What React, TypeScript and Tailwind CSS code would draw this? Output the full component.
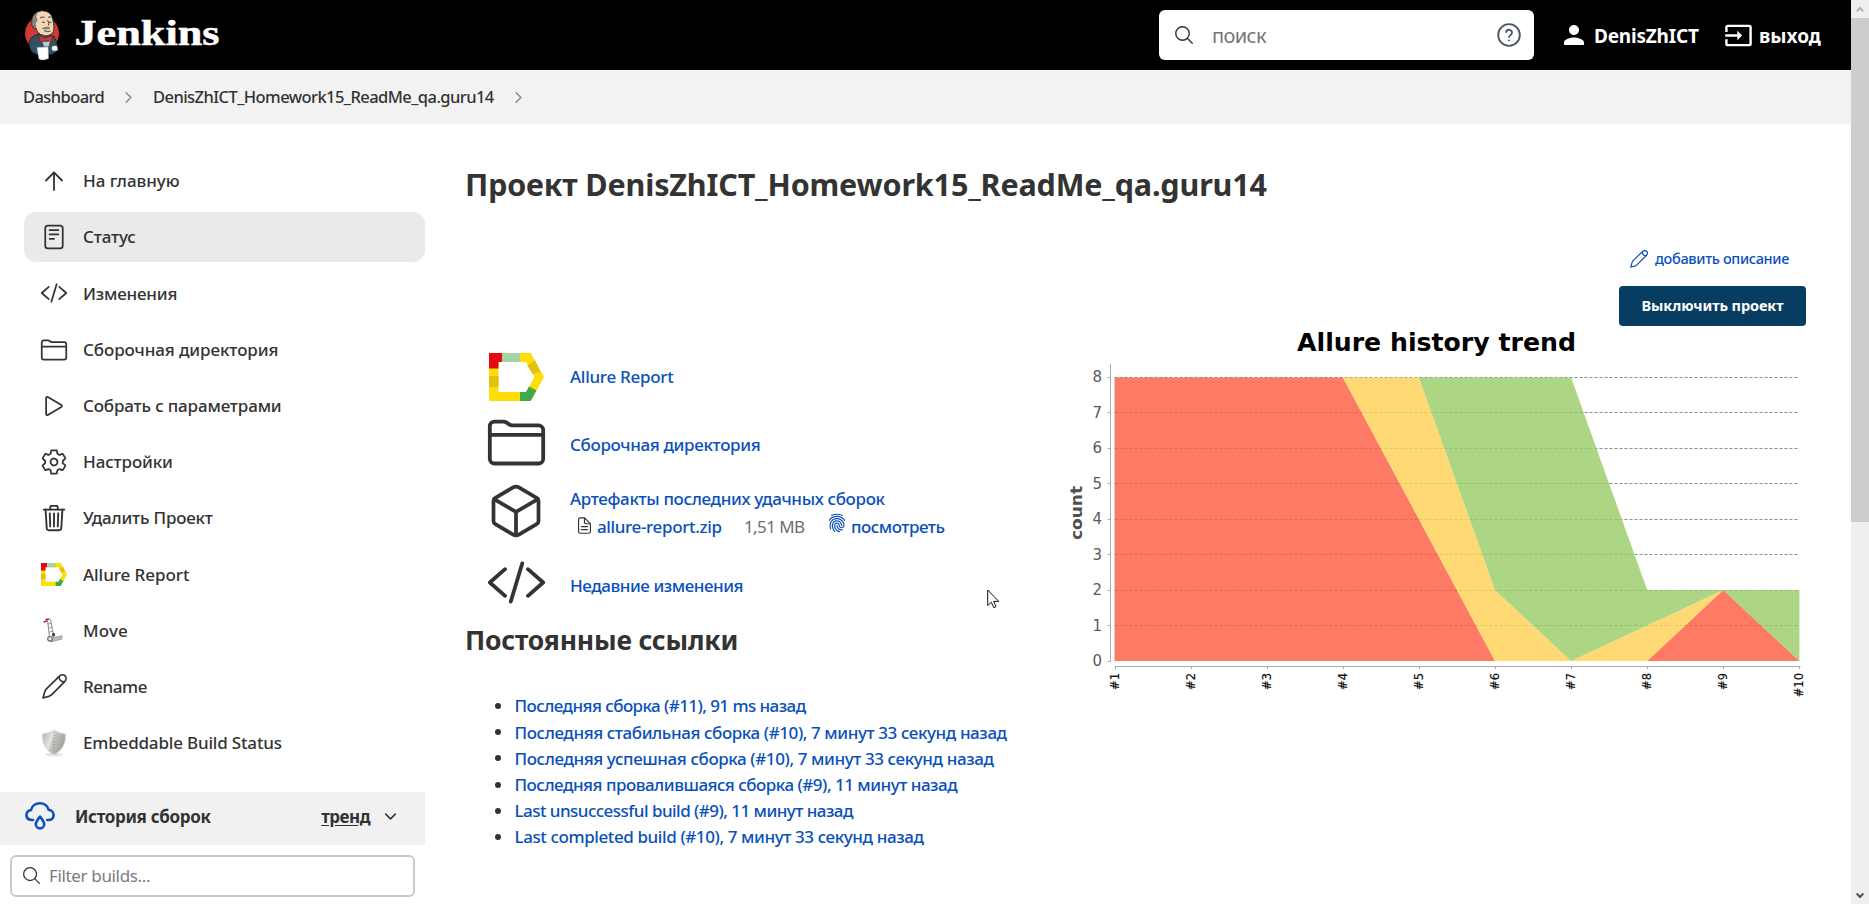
import React from "react";
import {
  IoReaderOutline,
  IoCodeSlashOutline,
  IoFolderOutline,
  IoPlayOutline,
  IoSettingsOutline,
  IoTrashOutline,
  IoCubeOutline,
  IoSearchOutline,
  IoChevronForward,
  IoChevronDown,
  IoDocumentTextOutline,
  IoFingerPrint,
} from "react-icons/io5";
import { MdInput, MdPerson } from "react-icons/md";

function JenkinsLogo() {
  return (
    <svg width="200" height="60" viewBox="0 0 200 60" className="shrink-0">
      <ellipse cx="18" cy="28.500" rx="17" ry="17" fill="#d33833" />
      <path d="M7 33 L13 29.500 L24 30 L30 31.500 Q35 40 32 46 L29 49 L14 50 L8 47 Q3 39 7 33Z" fill="#335061" stroke="#1b2a33" strokeWidth="1" />
      <path d="M8 18 Q7.500 7 17.500 5.800 Q27.500 5.500 29 15 L30 22 Q30.500 27 27 29.500 Q22 32.500 16.500 29.500 Q12.500 27 12 23 Q7.500 24 8 18Z" fill="#f0d6b7" stroke="#231f20" strokeWidth="0.9" />
      <path d="M8 18 Q7.500 10 13 7.500 Q10.500 12 13 15.500 L11 18 L11.500 22 Q7.500 22 8 18Z" fill="#8a8784" stroke="#3a3735" strokeWidth="0.6" />
      <path d="M16 13 q2.500 -2 4.500 -.5 M24 12.500 q2 -1.500 3.500 0 M18 17 q2 1 3 0 M25 17 q1.500 1 2.500 0 M23.500 15 q2.500 3.500 1 5.500 M20 25.500 q3.500 2 6.500 .5" fill="none" stroke="#3b2b20" strokeWidth="0.9" />
      <path d="M18.500 23.500 q3.500 -2.500 7.500 -.5 q-3 2 -7.500 .5Z" fill="#9b9894" stroke="#4a4642" strokeWidth="0.5" />
      <path d="M15.500 31 l5.500 2.500 6.500 -2.500 .8 6 -6 -1.500 -6 2Z" fill="#d33833" stroke="#8e1c18" strokeWidth="0.6" />
      <path d="M18.500 37 l7.500 -.5 -1.500 5 -4.500 0Z" fill="#b5c9d3" />
      <path d="M13 42.500 L24 42 L24.500 53.500 Q19 56 15 54Z" fill="#fff" stroke="#bbb" strokeWidth="0.5" />
      <path d="M27.500 41.500 q4 -2.500 6 0 l.5 4 q-4 1.800 -6.500 -.5Z" fill="#f4f4f4" stroke="#444" strokeWidth="0.7" />
      <text x="50.500" y="39.800" textLength="145" lengthAdjust="spacingAndGlyphs" fill="#fff" stroke="#fff" strokeWidth="0.500" className="font-['Liberation_Serif','serif'] text-[36px] font-bold">
        Jenkins
      </text>
    </svg>
  );
}

function HelpIcon() {
  return (
    <svg width="26" height="26" viewBox="0 0 24 24" fill="none" stroke="#4b5462" strokeWidth="1.700" strokeLinecap="round" strokeLinejoin="round">
      <circle cx="12" cy="12" r="10" />
      <path d="M9.400 9.200a2.700 2.700 0 0 1 5.300.9c0 1.800-2.700 2.500-2.700 3.700" />
      <path d="M12 17h.01" />
    </svg>
  );
}

function ArrowUp() {
  return (
    <svg width="30" height="30" viewBox="0 0 30 30" fill="none" stroke="currentColor" strokeWidth="1.800" strokeLinecap="round" strokeLinejoin="round">
      <path d="M7 14.500L15 6.300L23 14.500M15 6.800V24" />
    </svg>
  );
}

function Pencil({ size }: { size: number }) {
  return (
    <svg width={size} height={size} viewBox="0 0 24 24" fill="none" stroke="currentColor" strokeWidth="1.600" strokeLinejoin="round" strokeLinecap="round">
      <path d="M1 23 L2.600 17.200 C3 15.800 3.400 15 4.200 14.200 L16.800 2 C18.600 .5 21 .6 22.200 1.800 C23.500 3.100 23.400 5.400 22 7 L9.600 19.600 C8.800 20.400 8.200 20.800 7.200 21.200 Z" />
      <path d="M16.400 2.600 C16.400 5.400 18.400 7.500 21.400 7.500" />
    </svg>
  );
}

function AllureMark({ width, height }: { width: number; height: number }) {
  return (
    <svg width={width} height={height} viewBox="0 0 55 48" preserveAspectRatio="none">
      <path d="M0 0H41.700L55 24L41.700 48H0ZM9.500 9V39H37L45.500 24L37 9Z" fill="#ffde05" fillRule="evenodd" />
      <path d="M0 0H13V9H9.500V15.500H0Z" fill="#e50914" />
      <path d="M13 0H31V9H13Z" fill="#a6d3a4" />
      <path d="M0 23H9.500V34H0Z" fill="#dfc310" />
      <path d="M38.300 12.500L46 7.500L51.500 18.500L43.500 21Z" fill="#dfc310" />
      <path d="M31 48H41.700L47.500 37.500L40 33.500L37 39H31Z" fill="#3dab49" />
    </svg>
  );
}

function HandTruck() {
  return (
    <svg width="30" height="30" viewBox="0 0 30 30" fill="none">
      <path d="M8.500 4 L10.500 21 M11.500 3.500 L14.500 19" stroke="#8f8f8b" strokeWidth="1.100" />
      <path d="M9.200 8 l3 -.6 M9.800 12 l3 -.6 M10.400 16 l3 -.6" stroke="#777" strokeWidth="0.800" />
      <path d="M4.500 6 L8 5 M6.500 3.500 L10.500 3" stroke="#c8232c" strokeWidth="1.500" />
      <path d="M14 21.800 L23 19.800 L23 23 L12 25.800Z" fill="#b9bdb3" stroke="#8f9489" strokeWidth="0.800" />
      <path d="M13 17.500 L15.500 17 L16 20 L13.500 21Z" fill="#333" />
      <circle cx="11" cy="22.800" r="2.300" fill="#e5e5e2" stroke="#666" strokeWidth="1.100" />
    </svg>
  );
}

function Shield() {
  return (
    <svg width="30" height="30" viewBox="0 0 30 30">
      <defs>
        <linearGradient id="metal" x1="0" x2="1" y1="0" y2="0.400">
          <stop offset="0" stopColor="#aeb2aa" />
          <stop offset="0.450" stopColor="#e3e5df" />
          <stop offset="0.550" stopColor="#c3c6be" />
          <stop offset="1" stopColor="#9ea299" />
        </linearGradient>
      </defs>
      <ellipse cx="15" cy="26.500" rx="9" ry="1.800" fill="#e2e2e2" />
      <path d="M3.500 6 Q10 5.500 15 2 Q20 5.500 26.500 6 Q27.500 20 15 27 Q2.500 20 3.500 6Z" fill="url(#metal)" stroke="#d4d6d0" strokeWidth="0.900" />
      <path d="M15 4V25" stroke="#8d9188" strokeWidth="1" strokeDasharray="1 2" />
    </svg>
  );
}

function CloudDrop() {
  return (
    <svg width="30" height="28" viewBox="0 0 30 28" fill="none" stroke="#0b4fba" strokeWidth="2.600" strokeLinecap="round" strokeLinejoin="round">
      <path d="M8 18 H6.600 C-.2 17.600 -.2 8.800 6 8 C8 -.8 21.500 -1 23.600 7.800 C30.400 8.600 30.200 18 23.400 18 H22.200" />
      <path d="M15 14.500 C12.500 18 10.800 20 10.800 22.200 A4.200 4.200 0 0 0 19.200 22.200 C19.200 20 17.500 18 15 14.500Z" />
    </svg>
  );
}

const tasks = [
  { icon: <ArrowUp />, label: "На главную", tracking: "tracking-[-0.05px]" },
  { icon: <IoReaderOutline size={28} />, label: "Статус", tracking: "tracking-[-0.15px]", active: true },
  { icon: <IoCodeSlashOutline size={28} />, label: "Изменения", tracking: "tracking-[-0.2px]" },
  { icon: <IoFolderOutline size={28} />, label: "Сборочная директория", tracking: "tracking-[-0.09px]" },
  { icon: <IoPlayOutline size={28} />, label: "Собрать с параметрами", tracking: "tracking-[-0.16px]" },
  { icon: <IoSettingsOutline size={28} />, label: "Настройки", tracking: "tracking-[-0.12px]" },
  { icon: <IoTrashOutline size={30} />, label: "Удалить Проект", tracking: "tracking-[-0.2px]" },
  { icon: <AllureMark width={26} height={23} />, label: "Allure Report", tracking: "tracking-[-0.06px]" },
  { icon: <HandTruck />, label: "Move", tracking: "tracking-[0.15px]" },
  { icon: <Pencil size={25} />, label: "Rename", tracking: "tracking-[-0.45px]" },
  { icon: <Shield />, label: "Embeddable Build Status", tracking: "tracking-[-0.18px]" },
];

const permalinks = [
  { label: "Последняя сборка (#11), 91 ms назад", tracking: "tracking-[-0.56px]" },
  { label: "Последняя стабильная сборка (#10), 7 минут 33 секунд назад", tracking: "tracking-[-0.41px]" },
  { label: "Последняя успешная сборка (#10), 7 минут 33 секунд назад", tracking: "tracking-[-0.4px]" },
  { label: "Последняя провалившаяся сборка (#9), 11 минут назад", tracking: "tracking-[-0.49px]" },
  { label: "Last unsuccessful build (#9), 11 минут назад", tracking: "tracking-[-0.53px]" },
  { label: "Last completed build (#10), 7 минут 33 секунд назад", tracking: "tracking-[-0.4px]" },
];

const X0 = 54.5;
const STEP = 76.1;
const Y0 = 335;
const UNIT = 35.45;
const px = (i: number) => X0 + STEP * i;
const py = (v: number) => Y0 - UNIT * v;

const failed = [8, 8, 8, 8, 4, 0, 0, 0, 2, 0];
const broken = [8, 8, 8, 8, 8, 2, 0, 1, 2, 0];
const passed = [8, 8, 8, 8, 8, 8, 8, 2, 2, 2];
const zero = failed.map(() => 0);

function band(top: number[], bottom: number[]) {
  const up = top.map((v, i) => `${px(i)},${py(v)}`);
  const down = bottom.map((v, i) => `${px(i)},${py(v)}`).reverse();
  return [...up, ...down].join(" ");
}

function TrendChart() {
  return (
    <svg width="755" height="380" viewBox="0 0 755 380" className="shrink-0 font-['DejaVu_Sans','sans-serif']">
      <text x="237" y="24.500" textLength="279" lengthAdjust="spacingAndGlyphs" className="text-[24.500px] font-bold">
        Allure history trend
      </text>
      <g stroke="#8c8c8c" strokeWidth="1" strokeDasharray="3 2">
        {[1, 2, 3, 4, 5, 6, 7, 8].map((v) => (
          <line key={v} x1={X0} x2="739" y1={Math.floor(py(v)) + 0.5} y2={Math.floor(py(v)) + 0.5} />
        ))}
      </g>
      <polygon points={band(failed, zero)} fill="#fd5a3e" fillOpacity="0.8" />
      <polygon points={band(broken, failed)} fill="#ffd050" fillOpacity="0.8" />
      <polygon points={band(passed, broken)} fill="#97cc64" fillOpacity="0.8" />
      <g stroke="#a9a9a9" strokeWidth="1">
        <line x1="50.500" x2="50.500" y1="38" y2="336" />
        <line x1="55" x2="740.500" y1="340.500" y2="340.500" />
        {zero.map((_, i) => (
          <line key={i} x1={Math.round(px(i)) + 0.5} x2={Math.round(px(i)) + 0.5} y1="340" y2="343" />
        ))}
        {[0, 1, 2, 3, 4, 5, 6, 7, 8].map((v) => (
          <line key={v} x1="47.500" x2="50" y1={Math.floor(py(v)) + 0.5} y2={Math.floor(py(v)) + 0.5} />
        ))}
      </g>
      {[0, 1, 2, 3, 4, 5, 6, 7, 8].map((v) => (
        <text key={v} x="42" y={py(v) + 5} textAnchor="end" fill="#5a5a5a" className="text-[15px]">
          {v}
        </text>
      ))}
      {zero.map((_, i) => (
        <text key={i} transform={`translate(${px(i) + 4} 347) rotate(-90)`} textAnchor="end" fill="#111" stroke="#111" strokeWidth="0.2" className="text-[11.500px]">
          #{i + 1}
        </text>
      ))}
      <text transform="translate(22 187) rotate(-90)" textAnchor="middle" textLength="54" lengthAdjust="spacingAndGlyphs" fill="#505050" className="text-[16px] font-bold">
        count
      </text>
    </svg>
  );
}

export default function App() {
  return (
    <div className="relative flex h-[904px] w-full overflow-hidden bg-white font-['Noto_Sans','sans-serif'] text-[17px] text-[#333333]">
      <div className="flex min-w-0 flex-1 flex-col">
        <header className="flex h-[70px] shrink-0 items-center bg-black pr-[30px] pl-6 text-white">
          <JenkinsLogo />
          <div className="ml-auto flex h-[50px] w-[375px] items-center rounded-md bg-white pr-3 pl-[14px]">
            <IoSearchOutline size={22} className="text-[#333333]" />
            <span className="ml-[17px] pt-0.5 text-[20px] tracking-[-0.6px] text-[#757575]">поиск</span>
            <span className="ml-auto">
              <HelpIcon />
            </span>
          </div>
          <a className="ml-[25px] flex items-center gap-[5px] text-[19px] font-bold">
            <MdPerson size={30} />
            <span className="w-[104px] pt-0.5 tracking-[-0.2px] whitespace-nowrap">DenisZhICT</span>
          </a>
          <a className="ml-[26px] flex items-center gap-[6px] text-[19px] font-bold">
            <MdInput size={29} />
            <span className="w-[62px] pt-0.5 whitespace-nowrap">выход</span>
          </a>
        </header>

        <nav className="flex h-[54px] shrink-0 items-center bg-[#f2f2f2] pl-[23px] text-[16.500px] font-medium">
          <span className="w-[97px] tracking-[-0.58px]">Dashboard</span>
          <IoChevronForward size={17} className="text-[#8c8c8c]" />
          <span className="ml-[16px] w-[357px] tracking-[-0.56px] whitespace-nowrap">DenisZhICT_Homework15_ReadMe_qa.guru14</span>
          <IoChevronForward size={17} className="text-[#8c8c8c]" />
        </nav>

        <div className="flex min-h-0 flex-1">
          <aside className="flex w-[425px] shrink-0 flex-col pt-8">
            <div className="flex flex-col gap-[6.200px] pl-6 font-medium">
              {tasks.map((t) => (
                <a key={t.label} className={`flex h-[50px] items-center gap-[14px] rounded-xl pl-[15px] ${t.active ? "bg-[#eaeaea]" : ""}`}>
                  <span className="flex w-[30px] justify-center">{t.icon}</span>
                  <span className={t.tracking}>{t.label}</span>
                </a>
              ))}
            </div>
            <div className="mt-6 flex h-[53px] shrink-0 items-center bg-[#f1f1f1] pr-[26px] pb-1 pl-[25px] font-bold">
              <CloudDrop />
              <span className="ml-[20px] tracking-[-0.33px]">История сборок</span>
              <span className="mr-[12px] ml-auto tracking-[-0.5px] underline underline-offset-2">тренд</span>
              <IoChevronDown size={17} />
            </div>
            <div className="mx-[10px] mt-[10px] flex h-[42px] shrink-0 items-center rounded-md border-2 border-[#c3cdd3] pl-[9px]">
              <IoSearchOutline size={21} />
              <span className="ml-[7px] tracking-[-0.35px] text-[#7b7b7b]">Filter builds...</span>
            </div>
          </aside>

          <main className="flex min-w-0 flex-1 flex-col pt-10 pl-10">
            <h1 className="h-10 text-[30.500px] leading-10 font-bold tracking-[-0.16px] whitespace-nowrap">Проект DenisZhICT_Homework15_ReadMe_qa.guru14</h1>
            <div className="mt-[44px] flex h-[21px] items-center justify-end gap-[7px] pr-[62px] text-[14.500px] font-medium text-[#0b50ba]">
              <Pencil size={18} />
              <span className="tracking-[-0.35px]">добавить описание</span>
            </div>
            <div className="mt-[17px] flex justify-end pr-[45px]">
              <button className="h-10 w-[187px] rounded bg-[#073d60] text-[14.500px] font-bold tracking-[-0.08px] text-white">Выключить проект</button>
            </div>
            <div className="flex">
              <div className="w-[595px] shrink-0 pt-[17px]">
                <div className="flex flex-col pl-[19px] font-medium text-[#0b50ba]">
                  <div className="flex h-[68px] items-center gap-[22px]">
                    <span className="flex w-16 justify-center">
                      <AllureMark width={55} height={48} />
                    </span>
                    <a className="tracking-[-0.28px]">Allure Report</a>
                  </div>
                  <div className="flex h-16 items-center gap-[22px]">
                    <span className="flex w-16 justify-center pb-0.5 text-[#333333]">
                      <IoFolderOutline size={61} />
                    </span>
                    <a className="pt-1 tracking-[-0.34px]">Сборочная директория</a>
                  </div>
                  <div className="flex h-[73px] items-center gap-[22px]">
                    <span className="flex w-16 justify-center pb-0.5 text-[#333333]">
                      <IoCubeOutline size={60} />
                    </span>
                    <div className="pt-0.5 leading-7">
                      <a className="block tracking-[-0.34px]">Артефакты последних удачных сборок</a>
                      <div className="flex h-7 items-center pl-[5px] whitespace-nowrap">
                        <IoDocumentTextOutline size={19} className="mb-0.5 text-[#333333]" />
                        <a className="ml-[3px] w-[125px] tracking-[-0.36px]">allure-report.zip</a>
                        <span className="ml-[22px] w-[61px] font-normal tracking-[-0.6px] text-[#6b6f76]">1,51 MB</span>
                        <IoFingerPrint size={20} className="mb-2 ml-[22px]" />
                        <a className="ml-[4px] tracking-[-0.48px]">посмотреть</a>
                      </div>
                    </div>
                  </div>
                  <div className="flex h-[70px] items-center gap-[22px]">
                    <span className="flex w-16 justify-center pb-0.5 text-[#333333]">
                      <IoCodeSlashOutline size={61} />
                    </span>
                    <a className="pt-1.5 tracking-[-0.45px]">Недавние изменения</a>
                  </div>
                </div>
                <h2 className="h-[45px] text-[26.500px] leading-[44px] font-bold tracking-[-0.2px]">Постоянные ссылки</h2>
                <ul className="mt-[30px] font-medium">
                  {permalinks.map((p) => (
                    <li key={p.label} className="flex h-[26.200px] items-center pl-[30px] whitespace-nowrap">
                      <span className="size-[6px] rounded-full bg-[#333333]" />
                      <a className={`ml-[13.500px] text-[#0b50ba] ${p.tracking}`}>{p.label}</a>
                    </li>
                  ))}
                </ul>
              </div>
              <TrendChart />
            </div>
          </main>
        </div>
      </div>

      <div className="flex w-[18px] shrink-0 flex-col bg-[#efefef]">
        <div className="flex h-[18px] items-center justify-center">
          <svg width="8" height="7" viewBox="0 0 8 7" fill="none" stroke="#b4b4b4" strokeWidth="2">
            <path d="M.7 5.500L4 2L7.300 5.500" />
          </svg>
        </div>
        <div className="h-[504px] bg-[#cdcdcd]" />
        <div className="mt-auto flex h-[18px] items-center justify-center">
          <svg width="8" height="7" viewBox="0 0 8 7" fill="none" stroke="#505050" strokeWidth="2">
            <path d="M.7 1.500L4 5L7.300 1.500" />
          </svg>
        </div>
      </div>

      <svg width="13" height="20" viewBox="0 0 13 20" className="absolute top-[589px] left-[987px]">
        <path d="M.7 1V16.500L4.300 13.200L6.800 18.700L9 17.700L6.600 12.400H11.800Z" fill="#fff" stroke="#111" strokeWidth="1" />
      </svg>
    </div>
  );
}
